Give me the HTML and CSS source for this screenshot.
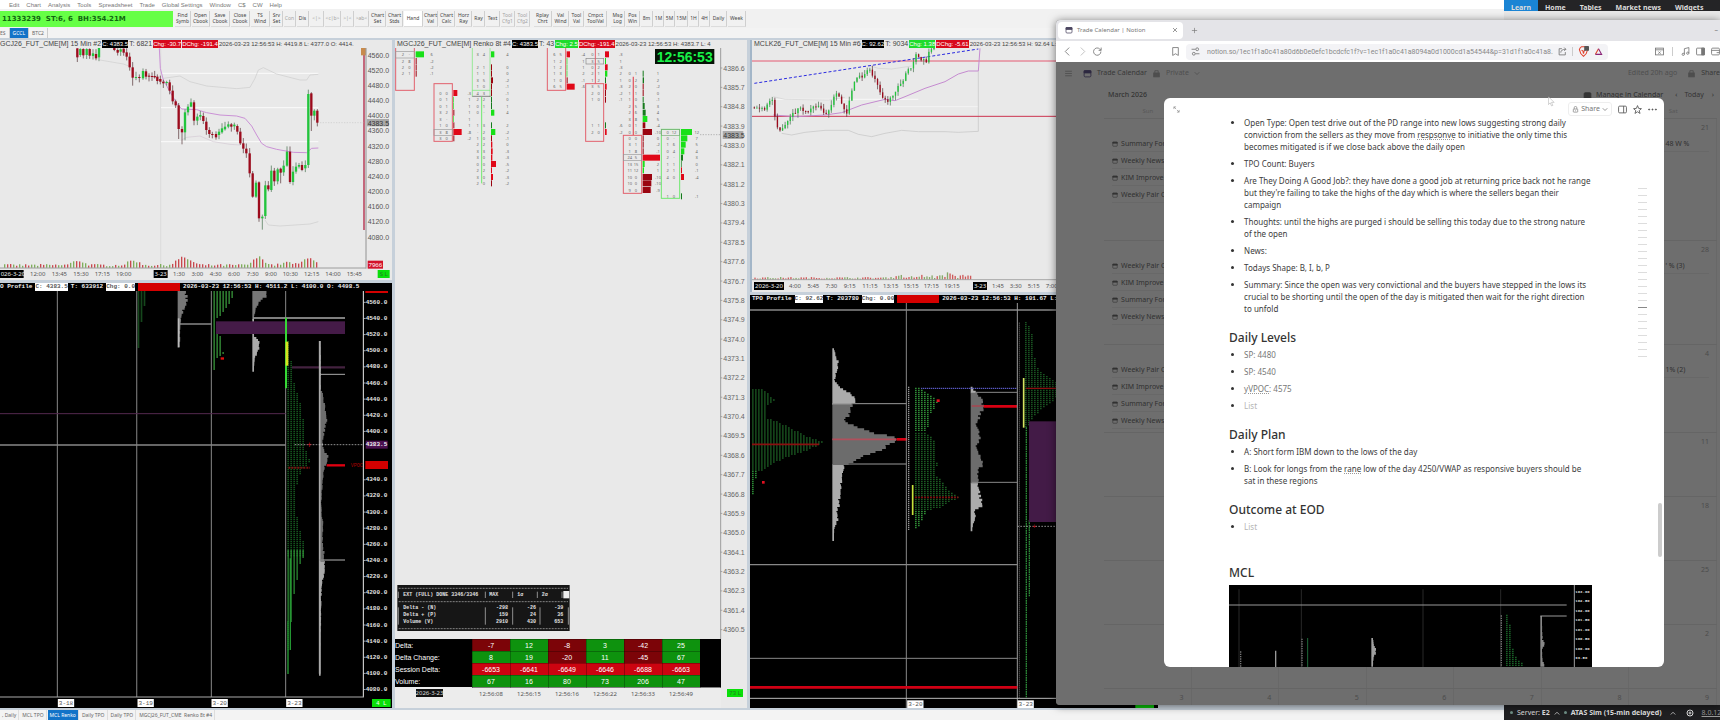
FILE: index.html
```html
<!DOCTYPE html>
<html lang="en">
<head>
<meta charset="utf-8">
<title>Trading desktop</title>
<link rel="stylesheet" href="styles.css">
</head>
<body>
<div class="desktop">
  <div class="platform">
    <nav class="menubar">
      <a href="#">Edit</a><a href="#">Chart</a><a href="#">Analysis</a><a href="#">Tools</a><a href="#">Spreadsheet</a><a href="#">Trade</a><a href="#">Global Settings</a><a href="#">Window</a><a href="#">C$</a><a href="#">CW</a><a href="#">Help</a>
    </nav>
    <div class="toolbar">
      <div class="status">11333239&nbsp; ST:6, 6&nbsp; BH:354.21M</div>
      <button class="w16">Find<br>Symb</button><button class="w18">Open<br>Cbook</button><button class="w19">Save<br>Cbook</button><button class="w19">Close<br>Cbook</button><button class="w19">TS<br>Wind</button><button class="w12">Srv<br>Set</button><button class="w12 dim">Con</button><button class="w12">Dis</button><button class="w14 dim">&lt;|&gt;</button><button class="w16 dim">&lt;c|b&gt;</button><button class="w12 dim">&gt;|&lt;</button><button class="w14 dim">&gt;ab&lt;</button><button class="w16">Chart<br>Set</button><button class="w16">Chart<br>Stds</button><button class="w19 on">Hand</button><button class="w14">Chart<br>Val</button><button class="w16">Chart<br>Calc</button><button class="w16">Horz<br>Ray</button><button class="w12">Ray</button><button class="w14">Text</button><button class="w14 dim">Tool<br>Cfg1</button><button class="w14 dim">Tool<br>Cfg2</button><button class="w18 group">Rplay<br>Chrt</button><button class="w16">Val<br>Wind</button><button class="w14">Tool<br>Val</button><button class="w22">Cmpct<br>ToolVal</button><button class="w14 group">Msg<br>Log</button><button class="w14">Pos<br>Win</button><button class="w12">8m</button><button class="w10">1M</button><button class="w10">5M</button><button class="w12">15M</button><button class="w10">1H</button><button class="w10">4H</button><button class="w16">Daily</button><button class="w18">Week</button>
    </div>
    <div class="books"><button>ES</button><button class="current">GCCL</button><button>BTC2</button></div>

    <main class="charts">
      <div class="stack left">
        <section class="chart light">
          <header class="info"><span>GCJ26_FUT_CME[M] 15 Min #2</span><b class="k">C: 4383.5</b><span>T: 6821</span><b class="r">Chg: -30.7</b><b class="r">DChg: -191.4</b><span class="when">2026-03-23 12:56:53 H: 4419.8 L: 4377.0 O: 4414.</span></header>
          <svg id="gold" viewBox="0 144 1176 696" preserveAspectRatio="xMinYMin slice"></svg>
        </section>
        <section class="chart dark">
          <header class="info mono"><span>O Profile</span><span class="w">C: 4383.5</span><span>T: 633912</span><span class="w">Chg: 0.0</span><span class="block"></span><span>2026-03-23 12:56:53 H: 4511.2 L: 4100.0 O: 4498.5</span></header>
          <svg id="goldTpo" viewBox="0 48 1176 1251" preserveAspectRatio="xMinYMin slice"></svg>
        </section>
      </div>
      <section class="chart light renko">
        <header class="info"><span>MGCJ26_FUT_CME[M] Renko 8t #4</span><b class="k">C: 4383.5</b><span>T: 43</span><b class="g">Chg: 2.5</b><b class="r">DChg: -191.4</b><span class="when">2026-03-23 12:56:53 H: 4383.7 L: 4</span></header>
        <svg id="renko" viewBox="15 144 1056 1776" preserveAspectRatio="xMinYMin slice"></svg>
        <table class="delta">
          <tbody>
            <tr><th scope="row">Delta:</th><td class="dr">-7</td><td class="gr">12</td><td class="dr">-8</td><td class="gr">3</td><td class="dr">-42</td><td class="gr">25</td><td></td></tr>
            <tr><th scope="row">Delta Change:</th><td class="gr">8</td><td class="gr">19</td><td class="dr">-20</td><td class="gr">11</td><td class="dr">-45</td><td class="gr">67</td><td></td></tr>
            <tr><th scope="row">Session Delta:</th><td class="rd">-6653</td><td class="rd">-6641</td><td class="rd">-6649</td><td class="rd">-6646</td><td class="rd">-6688</td><td class="rd">-6663</td><td></td></tr>
            <tr><th scope="row">Volume:</th><td class="gr">67</td><td class="gr">16</td><td class="gr">80</td><td class="gr">73</td><td class="gr">206</td><td class="gr">47</td><td></td></tr>
          </tbody>
          <tfoot>
            <tr><th scope="row"><span>2026-3-23</span></th><td>12:56:08</td><td>12:56:15</td><td>12:56:16</td><td>12:56:22</td><td>12:56:33</td><td>12:56:49</td><td></td></tr>
          </tfoot>
        </table>
        <span class="tag">73 L</span>
      </section>
      <div class="stack right">
        <section class="chart light crude">
          <header class="info"><span>MCLK26_FUT_CME[M] 15 Min #6</span><b class="k">C: 92.62</b><span>T: 9034</span><b class="g">Chg: 1.38</b><b class="r">DChg: -5.61</b><span class="when">2026-03-23 12:56:53 H: 92.64 L: 92.51</span></header>
          <svg id="crude" viewBox="21 144 1218 732" preserveAspectRatio="xMinYMin slice"></svg>
        </section>
        <section class="chart dark">
          <header class="info mono"><span>TPO Profile</span><span class="w">C: 92.62</span><span>T: 203780</span><span class="w">Chg: 0.00</span><span class="block"></span><span>2026-03-23 12:56:53 H: 101.67 L: 91.20</span></header>
          <svg id="crudeTpo" viewBox="15 39 1224 1215" preserveAspectRatio="xMinYMin slice"></svg>
        </section>
      </div>
    </main>
    <div class="sheets"><button>, Daily</button><button>MCL TPO</button><button class="current">MCL Renko</button><button>Daily TPO</button><button>Daily TPO</button><button>MGCJ26_FUT_CME&nbsp; Renko 8t #4</button></div>
  </div>

  <div class="atas">
    <nav><a class="here" href="#">Learn</a><a href="#">Home</a><a href="#">Tables</a><a href="#">Market news</a><a href="#">Widgets</a></nav>
    <footer><i class="dot"></i><span>Server: <b>E2</b></span><svg class="caret" viewBox="0 0 8 8"><path d="M1 6 4 3l3 3"/></svg><i class="dot"></i><b>ATAS Sim (15-min delayed)</b><span class="grow"></span><svg class="caret" viewBox="0 0 8 8"><path d="M1 6 4 3l3 3"/></svg><svg class="caret gear" viewBox="0 0 8 8"><circle cx="4" cy="4" r="3"/><circle cx="4" cy="4" r="1"/></svg><a href="#">8.0.12</a></footer>
  </div>

  <div class="browser">
    <div class="tabs">
      <div class="tab"><svg class="ico cal" viewBox="0 0 16 16"><rect x="2" y="3" width="12" height="11" rx="2"/><path class="fill" d="M2 3h12v4H2z"/></svg><span>Trade Calendar | Notion</span><button aria-label="Close tab"><svg class="ico" viewBox="0 0 16 16"><path d="M4 4l8 8M12 4l-8 8"/></svg></button></div>
      <button aria-label="New tab"><svg class="ico plus" viewBox="0 0 16 16"><path d="M8 2v12M2 8h12"/></svg></button>
      <span class="grow"></span><span class="min">–</span>
    </div>
    <div class="address">
      <button aria-label="Back"><svg class="ico" viewBox="0 0 16 16"><path d="M11 1 4 8l7 7"/></svg></button>
      <button class="off" aria-label="Forward"><svg class="ico" viewBox="0 0 16 16"><path d="m5 1 7 7-7 7"/></svg></button>
      <button aria-label="Reload"><svg class="ico" viewBox="0 0 16 16"><path d="M14 8A6.500 6.500 0 1 1 12 3.500L14 5.500M14.500 1v5H10"/></svg></button>
      <span class="room"></span>
      <button aria-label="Bookmark"><svg class="ico" viewBox="0 0 16 16"><path d="M3 1h10v14l-5-3-5 3z"/></svg></button>
      <div class="url"><svg class="ico" viewBox="0 0 16 16"><path d="M1 4h7M8 12h7"/><circle cx="11" cy="4" r="2.500"/><circle cx="5" cy="12" r="2.500"/></svg><input aria-label="Address" value="notion.so/1ec1f1a0c41a80d6b0e0efc1bcdcfc1f?v=1ec1f1a0c41a8094a0d1000cd1a54544&amp;p=31d1f1a0c41a8..." readonly><svg class="ico" viewBox="0 0 16 16"><path d="M7 3H2v11h11V9M5 10c0-4 3-6 9-6M11 1l3 3-3 3"/></svg><span class="bar"></span><svg class="ico brave" viewBox="0 0 16 16"><path d="M3 3 5 1h6l2 2 1 2-2 6-4 4-4-4L2 5zM5 6l2 1 1 4 1-4 2-1"/><rect class="badge" x="9" y="0" width="7" height="7" rx="1"/></svg><svg class="ico bat" viewBox="0 0 16 16"><path class="b1" d="M8 3 2.500 13"/><path class="b2" d="M8 3l5.500 10h-11"/></svg></div>
      <span class="grow"></span>
      <svg class="ico" viewBox="0 0 16 16"><rect x="1" y="2" width="14" height="12"/><path d="M1 5h14M6 8l4 4M10 8l-4 4"/></svg>
      <span class="bar wide"></span>
      <svg class="ico" viewBox="0 0 16 16"><path d="M6 13V3l8-2v10"/><circle cx="4" cy="13" r="2"/><circle cx="12" cy="11" r="2"/></svg>
      <svg class="ico" viewBox="0 0 16 16"><rect x="1" y="2" width="14" height="12" rx="1"/><path class="fill" d="M10 2h5v12h-5z"/></svg>
      <svg class="ico" viewBox="0 0 16 16"><rect x="1" y="2" width="14" height="12" rx="2"/><path d="M1 6h14M10 10h5"/></svg>
    </div>
    <div class="page">
      <div class="crumbs"><svg class="ico" viewBox="0 0 16 16"><path d="M2 4h12M2 8h12M2 12h12"/></svg><svg class="ico cal" viewBox="0 0 16 16"><rect x="2" y="3" width="12" height="11" rx="2"/><path class="fill" d="M2 3h12v4H2z"/></svg><span class="name">Trade Calendar</span><svg class="ico" viewBox="0 0 16 16"><rect class="fill" x="3" y="7" width="10" height="7"/><path d="M5 7V3h6v4"/></svg><span>Private</span><svg class="caret" viewBox="0 0 8 8"><path d="M1 3l3 3 3-3"/></svg><span class="grow"></span><span class="edited">Edited 20h ago</span><svg class="ico" viewBox="0 0 16 16"><rect class="fill" x="3" y="7" width="10" height="7"/><path d="M5 7V3h6v4"/></svg><span class="name">Share</span></div>
      <div class="month"><b>March 2026</b><span class="grow"></span><svg class="ico" viewBox="0 0 16 16"><rect class="fill" x="2" y="3" width="12" height="11" rx="2"/></svg><b>Manage in Calendar</b><span class="prev">‹</span><span>Today</span><span class="next">›</span></div>
      <div class="days"><span>Sun</span><span>Mon</span><span>Tue</span><span>Wed</span><span>Thu</span><span>Fri</span><span>Sat</span></div>
      <div class="weeks" id="weeks"></div>

      <article class="note">
        <header>
          <svg class="ico" viewBox="0 0 16 16"><path d="M2 7V2h5M2 2l5 5M14 9v5H9M14 14l-5-5"/></svg>
          <span class="grow"></span>
          <button class="share"><svg class="ico" viewBox="0 0 16 16"><rect x="3" y="7" width="10" height="7" rx="1"/><path d="M5 7V4a3 3 0 0 1 6 0v3M8 10v2"/></svg>Share<svg class="caret" viewBox="0 0 8 8"><path d="M1 3l3 3 3-3"/></svg></button>
          <button aria-label="Side panel"><svg class="ico" viewBox="0 0 16 16"><rect x="1" y="2" width="14" height="12" rx="2"/><path d="M10 2v12"/></svg></button>
          <button aria-label="Favourite"><svg class="ico" viewBox="0 0 16 16"><path d="m8 1 2 5 5 .5-4 3.500 1.500 5L8 12l-4.500 3L5 10 1 6.500 6 6z"/></svg></button>
          <button aria-label="More"><svg class="ico" viewBox="0 0 16 16"><circle class="fill" cx="2" cy="8" r="1"/><circle class="fill" cx="8" cy="8" r="1"/><circle class="fill" cx="14" cy="8" r="1"/></svg></button>
        </header>
        <div class="body">
          <ul>
            <li>Open Type: Open test drive out of the PD range into new lows suggesting strong daily conviction from the sellers as they move from <u>respsonve</u> to initiative the only time this becomes mitigated is if we close back above the daily open</li>
            <li>TPO Count: Buyers</li>
            <li>Are They Doing A Good Job?: they have done a good job at returning price back not he range but they're failing to take the highs of the day which is where the sellers began their campaign</li>
            <li>Thoughts: until the highs are purged i should be selling this today due to the strong nature of the open</li>
            <li>News:</li>
            <li>Todays Shape: B, I, b, P</li>
            <li>Summary: Since the open was very convictional and the buyers have stepped in the lows its crucial to be shorting until the open of the day is mitigated then wait for the right direction to unfold</li>
          </ul>
          <h2>Daily Levels</h2>
          <ul class="soft"><li>SP: 4480</li><li>SP: 4540</li><li><u>yVPOC</u>: 4575</li><li class="empty">List</li></ul>
          <h2>Daily Plan</h2>
          <ul><li>A: Short form IBM down to the lows of the day</li><li>B: Look for longs from the <u>rane</u> low of the day 4250/VWAP as responsive buyers should be sat in these regions</li></ul>
          <h2>Outcome at EOD</h2>
          <ul><li class="empty">List</li></ul>
          <h2 class="far">MCL</h2>
          <svg id="shot" viewBox="535 919 1089 249" preserveAspectRatio="xMinYMin slice"></svg>
        </div>
        <div class="outline" id="outline"></div>
        <div class="scroll"></div>
      </article>
      <svg class="cursor" viewBox="0 0 16 24"><path d="M1 1v18l4-4 3 7 3-1-3-7h6z"/></svg>
    </div>
  </div>
</div>
<script src="app.js"></script>
</body>
</html>
```

FILE: styles.css
```css
* { box-sizing: border-box; }
body { margin: 0; background: #f0f0f0; color: #555; font-family: "Liberation Sans", Arial, sans-serif; }
button { font: inherit; color: inherit; background: none; border: 0; padding: 0; margin: 0; }
a { color: inherit; text-decoration: none; }
.desktop { position: relative; height: 100vh; overflow: hidden; }
.grow { flex: 1; }

/* trading platform */
.platform { height: 100%; display: grid; grid-template-rows: 9px 19px 10px minmax(0, 1fr) 10px; font-size: 7px; white-space: nowrap; }
.menubar { display: flex; gap: 7px; padding-left: 9px; align-items: center; background: #fff; font-size: 6px; color: #777; }
.toolbar { display: flex; align-items: center; gap: 1px; background: #f1f1f1; color: #444; }
.toolbar button { flex: none; height: 16px; border-right: 1px solid #cfcfcf; border-bottom: 1px solid #dcdcdc; text-align: center; font: 5px/6px "Noto Sans", sans-serif; }
.toolbar .dim { color: #a4a4a4; }
.toolbar .on { background: #fff; }
.toolbar .group { margin-left: 3px; }
.status { width: 173px; height: 16px; margin-right: 1px; padding-left: 2px; background: #66ff46; color: #116611; font: bold 7px/16px "DejaVu Sans", sans-serif; }
.w10 { width: 10px; } .w12 { width: 12px; } .w14 { width: 14px; } .w16 { width: 16px; } .w18 { width: 18px; } .w19 { width: 19px; } .w22 { width: 22px; }
.books, .sheets { display: flex; align-items: stretch; font: 5px/9px "Noto Sans", sans-serif; color: #666; background: #f3f3f3; }
.books button { padding: 0 3px; border-right: 1px solid #ccc; }
.books button:first-child { padding-left: 0; }
.sheets { gap: 1px; }
.sheets button { padding: 0 2px; border-right: 1px solid #ddd; }
.books .current, .sheets .current { background: #1273c8; color: #fff; }

.charts { display: grid; grid-template-columns: 392fr 352fr 408fr 559fr; gap: 3px; padding: 2px 0; background: #c6d0da; min-height: 0; }
.stack { display: grid; gap: 3px; min-height: 0; }
.stack.left { grid-template-rows: minmax(0, 240fr) minmax(0, 425fr); }
.stack.right { grid-template-rows: minmax(0, 252fr) minmax(0, 413fr); }
.chart { position: relative; display: flex; flex-direction: column; min-height: 0; min-width: 0; overflow: hidden; }
.chart > svg { flex: 1; width: 100%; min-height: 0; display: block; }
.light { background: #e9e9e9; }
.dark { background: #000; color: #e8e8e8; }
.crude { border-left: 2px solid #a3b6c8; }
.info { flex: none; height: 8px; display: flex; gap: 1px; font: 7px/8px "Liberation Sans", sans-serif; overflow: hidden; color: #444; }
.info .when { font-size: 6px; }
.renko .info, .crude .info { padding-left: 2px; }
.info b { font-weight: normal; color: #fff; font-size: 6px; }
.info .k { background: #000; } .info .r { background: #d80a1c; } .info .g { background: #1fdc2c; }
.mono { font: bold 6px/8px "Liberation Mono", monospace; color: #eee; gap: 3px; padding-right: 2px; }
.mono .w { background: #fff; color: #555; }
.mono .block { width: 42px; background: #d40000; flex: none; }
.stack.right .mono { padding-left: 2px; }
.delta { width: 326px; border-collapse: collapse; table-layout: fixed; background: #000; color: #fff; font: 7px/11px "Liberation Sans", sans-serif; flex: none; }
.delta th { width: 77px; text-align: left; font-weight: normal; padding: 0; }
.delta td { width: 38px; padding: 0; text-align: center; border: 1px solid #0004; height: 12px; }
.delta td:last-child { width: auto; }
.delta .gr { background: #0e920e; } .delta .dr { background: #7c0408; } .delta .rd { background: #cc0410; }
.delta tfoot { background: #ececec; color: #555; font: 6px/13px "Noto Sans", sans-serif; }
.delta tfoot td { height: 21px; border: 0; vertical-align: top; }
.delta tfoot th { text-align: center; vertical-align: top; padding-right: 8px; }
.delta tfoot span { background: #111; color: #ddd; }
.tag { position: absolute; right: 4px; bottom: 11px; padding: 0 2px; background: #0adf0a; color: #267a26; font-size: 6px; line-height: 8px; }

/* platform window behind the browser */
.atas { position: absolute; top: 0; bottom: 0; right: 0; width: 216px; display: flex; flex-direction: column; justify-content: space-between; color: #ddd; font: 7px/16px "Noto Sans", sans-serif; background: #e8e8e8; }
.atas nav { display: flex; height: 11px; background: #242426; overflow: hidden; font-weight: bold; }
.atas nav a { padding: 0 7px; font-size: 7px; }
.atas .here { background: #1a84d4; }
.atas footer { height: 15px; display: flex; align-items: center; gap: 4px; padding: 0 2px 0 6px; background: #1f1f21; white-space: nowrap; overflow: hidden; }
.atas footer a { color: #999; text-decoration: underline; }
.atas footer .gear { margin: 0 4px 0 6px; width: 8px; height: 8px; }
.dot { width: 3px; height: 3px; border-radius: 50%; background: #6f8f86; flex: none; }

/* browser */
.browser { position: absolute; left: 61.4%; right: 0; top: 20px; bottom: 15px; display: flex; flex-direction: column; background: #6e6e6e; border-radius: 4px 0 0 4px; overflow: hidden; box-shadow: 0 1px 8px #0008; font: 7px/10px "Noto Sans", "Open Sans", sans-serif; white-space: nowrap; }
.ico, .caret { width: 9px; height: 9px; flex: none; fill: none; stroke: currentColor; stroke-width: 1.5px; display: block; }
.caret { width: 6px; height: 6px; stroke-width: 1px; }
.fill { fill: currentColor; }
.tabs { height: 21px; flex: none; display: flex; align-items: center; gap: 8px; padding: 1px 0 2px 2px; background: #e4e4e8; color: #777; }
.tab { width: 125px; height: 17px; border-radius: 4px; background: #fff; display: flex; align-items: center; gap: 4px; padding: 0 4px 0 7px; }
.tab span { flex: 1; font-size: 6px; }
.tab .ico { width: 8px; height: 8px; }
.plus { width: 7px; height: 7px; }
.cal { color: #4b4560; }
.tabs .min { padding-right: 2px; }
.address { height: 21px; flex: none; display: flex; align-items: center; gap: 6px; padding: 0 0 0 7px; background: #fff; color: #777; }
.address .off { opacity: .5; }
.room { width: 57px; }
.url { width: 422px; height: 16px; border-radius: 4px; background: #f3f3f6; display: flex; align-items: center; gap: 5px; padding: 0 5px; }
.url input { flex: 1; min-width: 0; border: 0; padding: 0 0 0 2px; background: none; color: #888; font: 7px/12px Roboto, sans-serif; }
.bar { width: 1px; height: 9px; background: #ccc; }
.bar.wide { margin: 0 2px; }
.brave { color: #e2432e; width: 11px; height: 11px; }
.badge { fill: #555; stroke: none; }
.b1 { stroke: #e04a2c; } .b2 { stroke: #8b2478; }
.bat { stroke-width: 2px; }

.page { position: relative; flex: 1; min-height: 0; display: flex; flex-direction: column; background: #6e6e6e; color: #4e4e4e; overflow: hidden; }
.crumbs { height: 22px; flex: none; display: flex; align-items: center; gap: 5px; padding-left: 8px; }
.crumbs .name, .crumbs .cal { color: #383838; }
.crumbs .cal { margin-left: 5px; color: #2d2840; }
.crumbs .edited { margin-right: 5px; }
.month { height: 22px; flex: none; display: flex; align-items: center; gap: 4px; padding: 0 6px 0 52px; color: #343434; }
.month b { font-weight: 500; }
.month .prev { margin: 0 3px 0 8px; }
.month .next { margin-left: 4px; }
.days { height: 13px; flex: none; display: grid; grid-template-columns: repeat(7, 1fr); margin: 0 3px 0 48px; text-align: center; font-size: 6px; color: #585858; border-bottom: 1px solid #656565; }
.weeks { flex: none; display: grid; grid-template-rows: 122px 104px 88px repeat(5, 64px); margin: 0 3px 0 48px; }
.week { display: grid; grid-template-columns: repeat(7, 1fr); border-bottom: 1px solid #656565; }
.day { border-right: 1px solid #686868; padding: 4px 7px 0 8px; overflow: hidden; text-align: right; color: #4c4c4c; min-width: 0; }
.day p { display: flex; align-items: center; gap: 3px; margin: 0 0 1px; height: 16px; border-bottom: 1px solid #686868; color: #303030; }
.day p:nth-child(2) { margin-top: 3px; }
.day p .ico { width: 6px; height: 6px; }
.day p.tail { padding-left: 28px; }

.note { position: absolute; left: 108px; right: 56px; top: 36px; bottom: 38px; background: #fff; border-radius: 6px; overflow: hidden; color: #3c3c3c; white-space: normal; display: flex; flex-direction: column; }
.note header { height: 19px; flex: none; display: flex; align-items: center; gap: 6px; padding: 3px 7px 0 9px; color: #555; }
.note header > .ico { width: 7px; height: 7px; color: #888; }
.share { display: flex; align-items: center; gap: 2px; padding: 1px 3px; border: 1px solid #eee; border-radius: 3px; color: #777; }
.note .share .ico { width: 7px; height: 7px; }
.body { padding: 0 72px 0 65px; font: 8px/12px "Noto Sans", "Open Sans", sans-serif; }
.body ul { margin: 0; padding: 0 0 0 15px; display: flex; flex-direction: column; gap: 5px; }
.body li { padding: 0; }
.body li::marker { font-size: 8px; color: #333; }
.body u { text-decoration: underline dotted #999; }
.soft { color: #777; }
.body .empty { color: #b5b5b5; }
.body h2 { margin: 15px 0 3px; font: 500 12px/16px "Noto Sans", "Open Sans", sans-serif; color: #333; }
.body .far { margin: 32px 0 4px; }
.body svg { display: block; width: 100%; height: 83px; }
.outline { position: absolute; right: 17px; top: 90px; display: flex; flex-direction: column; gap: 6px; }
.outline i { width: 9px; height: 1px; background: #ddd; }
.outline .at { background: #888; }
.scroll { position: absolute; right: 2px; top: 405px; width: 4px; height: 54px; border-radius: 2px; background: #ccc; }
.cursor { position: absolute; left: 492px; top: 34px; width: 7px; height: 11px; fill: #fff; stroke: #999; stroke-width: 1px; }
```

FILE: app.js
```js
const NS = "http://www.w3.org/2000/svg";
const SANS = '"Liberation Sans",Arial,sans-serif';
const NOTO = '"Noto Sans",sans-serif';
const MONO = '"Liberation Mono",monospace';

let seed = 7;
const rnd = () => (seed = (seed * 16807) % 2147483647) / 2147483647;

/* piecewise linear lookup over [[key, value], ...] */
const lerp = (pts, k) => {
  for (let i = 1; i < pts.length; i++) {
    if (k <= pts[i][0]) {
      const [a, b] = [pts[i - 1], pts[i]];
      return a[1] + (b[1] - a[1]) * (k - a[0]) / (b[0] - a[0]);
    }
  }
  return pts[pts.length - 1][1];
};

const canvas = id => {
  const root = document.getElementById(id);
  const el = (tag, attrs, text) => {
    const n = document.createElementNS(NS, tag);
    for (const k in attrs) n.setAttribute(k, attrs[k]);
    if (text !== undefined) n.textContent = text;
    root.appendChild(n);
    return n;
  };
  const c = {
    rect: (x, y, width, height, fill) => el("rect", { x, y, width, height, fill }),
    box: (x, y, width, height, stroke, w = 2) => el("rect", { x, y, width, height, stroke, fill: "none", "stroke-width": w }),
    line: (x1, y1, x2, y2, stroke, w = 3, dash = "none") => el("line", { x1, y1, x2, y2, stroke, "stroke-width": w, "stroke-dasharray": dash }),
    curve: (points, stroke, w = 2) => el("polyline", { points, stroke, fill: "none", "stroke-width": w, "stroke-linejoin": "round" }),
    text: (x, y, s, fill, size = 18, family = NOTO, anchor = "middle", weight = "normal") =>
      el("text", { x, y, fill, "font-size": size, "font-family": family, "text-anchor": anchor, "font-weight": weight, "dominant-baseline": "central", "xml:space": "preserve" }, s),
    badge: (x, y, w, s, bg, fg, size = 18, family = NOTO) => {
      c.rect(x - w / 2, y - 12, w, 24, bg);
      c.text(x, y, s, fg, size, family);
    },
    candle: (x, top, bottom, up, high, low, w = 7) => {
      const col = up ? "#22c53c" : "#9c0a1c";
      c.line(x, high, x, low, up ? "#3d6b45" : "#4d2a2e", 2);
      c.rect(x - w / 2, top, w, Math.max(3, bottom - top), col);
    },
    /* stepped volume histogram growing right from x, one path per shade */
    profile: (x, pts, shade) => {
      const end = pts[pts.length - 1][0];
      const paths = {};
      for (let y = pts[0][0]; y < end; y += 6) {
        const base = lerp(pts, y) - x;
        const w = Math.max(5, base + (rnd() - 0.5) * Math.min(10, base * 0.4));
        const col = shade(y);
        paths[col] = (paths[col] || "") + `M${x} ${y}h${w.toFixed(1)}v8h${(-w).toFixed(1)}z`;
      }
      for (const fill in paths) el("path", { d: paths[fill], fill });
    },
    /* letter blocks of a market profile */
    tpo: (x, pts, color) => {
      let d = "";
      const end = pts[pts.length - 1][0];
      for (let y = pts[0][0]; y < end; y += 6) d += `M${x} ${y}h${Math.max(5, Math.round((lerp(pts, y) - x) / 9) * 9)}`;
      el("path", { d, stroke: color, "stroke-width": 4, "stroke-dasharray": "5 4", fill: "none" });
    }
  };
  return c;
};

/* gold, 15 minutes */
{
  const c = canvas("gold");
  c.line(482, 145, 482, 803, "#d6d6d6", 2);
  for (const y of [220, 323, 425]) c.line(483, y, 955, y, "#f8f8f8", 4);
  c.curve("300,180 370,192 392,200", "#cfcfcf");
  c.curve("490,235 540,228 570,245 620,258 710,266 750,262 765,235 775,210 790,203 830,222 900,240 920,240 930,225 955,223", "#cbcbcb");
  c.curve("545,420 560,412 600,408 640,425 690,433 720,435", "#d3c8d3");
  c.curve("795,660 805,675 840,678 930,672 955,665", "#cbcbcb");
  c.curve("478,145 481,205 490,240 510,275 530,310 545,327 590,329 620,338 660,345 710,348 735,355 755,378 770,405 785,430 800,440 830,448 880,457 920,458 935,445 955,444", "#cb92d6", 3);
  const bars = [
    [232,145,172,0],[241,147,165,1],[250,147,166,0],[260,147,165,1],[269,147,167,0],[279,160,168,1],[288,162,175,0],[297,144,172,1],
    [343,144,150,0],[353,150,158,0],[362,148,155,1],[371,146,158,0],[380,157,170,0],[389,170,202,0],[398,202,233,0],[408,231,233,1],[418,231,234,0],
    [429,213,235,1],[438,214,230,0],[447,227,230,0],[456,228,231,0],[464,228,232,0],[472,230,243,0],[481,237,245,0],[490,245,250,0],[500,246,249,1],[509,247,272,0],[518,272,304,0],
    [527,304,316,0],[536,316,387,0],[546,387,397,0],[555,337,397,1],[564,320,337,1],[573,307,320,1],[582,307,362,0],[592,350,362,1],[601,345,350,1],
    [610,348,363,0],[619,365,390,0],[628,390,402,0],[637,402,405,0],[648,402,412,0],[657,395,405,1],[666,385,397,1],[675,380,388,1],[685,373,380,1],
    [694,373,380,0],[703,374,379,1],[712,378,395,0],[721,395,430,0],[730,430,446,0],[739,446,460,0],[749,460,520,0],[758,520,590,0],[768,548,590,1],
    [777,547,655,0],[787,650,655,1],[796,556,648,1],[805,556,568,0],[814,512,570,1],[823,512,544,0],[833,508,544,1],[842,506,518,0],[851,497,517,1],
    [861,455,497,1],[870,455,546,0],[879,515,546,1],[888,500,515,1],[897,495,500,1],[906,495,510,0],[916,495,505,1],[925,282,495,1],[934,280,347,0],[943,332,347,1],[952,332,368,0]
  ];
  const long = { 398: 24, 536: 30, 546: 36, 555: 24, 787: 34, 934: 46, 842: 32, 573: 2 };
  for (const [x, a, b, up] of bars) c.candle(x, a, b, up, Math.max(145, a - 3 - rnd() * 14), b + (long[x] || 3 + rnd() * 12));
  for (let x = 12; x < 956; x += 9) {
    const peak = [[232,14],[398,14],[540,18],[565,12],[775,24],[860,8],[925,24]].reduce((s, [p, h]) => s + h * Math.exp(-(((x - p) / 22) ** 2)), 0);
    const h = 4 + rnd() * 7 + peak;
    c.rect(x, 803 - h, 4, h, rnd() > 0.45 ? "#c8484e" : "#7fae5c");
  }
  c.line(0, 804, 1097, 804, "#777", 2);
  c.line(1092, 150, 1092, 690, "#c4687c", 6);
  c.rect(1083, 144, 14, 22, "#c88b4c");
  c.line(1098, 144, 1098, 806, "#666", 2);
  c.line(960, 368, 1090, 368, "#c9c9c9", 2, "4 4");
  c.rect(1101, 357, 66, 22, "#a9a9a9");
  for (let i = 0; i <= 12; i++) c.text(1103, 165 + i * 45.5, (4560 - i * 40).toFixed(1), "#555", 21, SANS, "start");
  c.text(1103, 369, "4383.5", "#333", 21, SANS, "start");
  c.badge(1126, 794, 46, "7966", "#d3122a", "#fff");
  [["12:00",113],["13:45",178],["15:30",243],["17:15",307],["19:00",371],["1:30",537],["3:00",592],["4:30",647],["6:00",702],["7:30",758],["9:00",813],["10:30",871],["12:15",935],["14:00",999],["15:45",1063]].forEach(([s, x]) => c.text(x, 822, s, "#555"));
  c.rect(0, 810, 71, 24, "#000");
  c.text(2, 822, "026-3-20", "#eee", 18, NOTO, "start");
  c.badge(482, 822, 42, "3-23", "#000", "#eee");
  c.badge(1151, 822, 36, "S L", "#0adf0a", "#267a26", 18);
}

/* gold, market profile */
{
  const c = canvas("goldTpo");
  c.tpo(413, [[48,443],[90,436],[150,425],[218,416]], "#1d5f26");
  c.profile(533, [[48,555],[70,562],[100,550],[120,543],[150,540],[216,539]], () => "#777");
  c.line(536, 130, 536, 216, "#bbb", 5);
  c.line(540, 147, 634, 147, "#999", 4);
  c.tpo(640, [[48,705],[80,695],[110,672],[140,645],[180,655],[190,668],[235,672],[255,650],[285,641]], "#3a9c3c");
  c.profile(757, [[48,795],[60,795],[90,770],[130,760],[180,762],[195,775],[225,776],[240,765],[283,761]], y => y < 130 ? "#777" : "#aaa");
  c.rect(648, 139, 387, 38, "#451b48");
  c.line(760, 129, 1035, 129, "#aaa", 4);
  c.rect(662, 247, 10, 7, "#e01010");
  c.tpo(862, [[200,866],[240,874],[310,880],[350,893],[400,908],[450,914],[520,916],[560,935],[590,905],[640,890],[720,893],[760,900],[825,920],[845,915]], "#14521d");
  c.tpo(862, [[828,918],[845,914],[870,900],[900,897],[960,884],[1040,880]], "#2c8e34");
  c.tpo(862, [[1040,875],[1125,871]], "#1f7f2a");
  c.line(864, 1040, 864, 1197, "#1f7f2a", 5);
  c.line(871, 850, 871, 1125, "#239632", 4);
  c.line(172, 48, 172, 1266, "#888");
  c.line(410, 48, 410, 1266, "#666", 4);
  c.line(634, 48, 634, 1266, "#888");
  c.line(857, 48, 857, 1266, "#888");
  c.line(858, 128, 858, 340, "#36d836", 6);
  c.line(861, 200, 861, 272, "#d8e020", 8);
  c.line(0, 416, 857, 416, "#53294f", 3);
  c.line(0, 510, 857, 510, "#888", 4);
  c.line(876, 277, 1035, 277, "#43223f", 7);
  c.line(865, 578, 930, 578, "#7a1010", 6, "6 3");
  c.profile(957, [[198,962],[340,962],[360,970],[435,978],[500,966],[540,982],[590,970],[680,963],[760,970],[800,968],[855,975],[890,972],[930,964],[1195,960]], y => y > 340 && y < 855 ? "#6d6d6d" : "#a8a8a8");
  c.line(959, 198, 959, 1196, "#aaa", 5);
  c.line(957, 298, 1035, 298, "#aaa");
  c.line(959, 855, 1035, 855, "#888", 4);
  c.line(980, 571, 1035, 571, "#e00010", 7);
  c.text(1070, 572, "VPOC", "#a00", 15, MONO);
  c.line(884, 509, 1090, 509, "#ddd", 2, "5 4");
  c.text(928, 509, "+", "#d01020", 24);
  c.line(1090, 48, 1090, 1266, "#eee");
  c.line(0, 1266, 1092, 1266, "#aaa");
  for (let i = 0; i <= 24; i++) {
    if (i === 9 || i === 10) continue;
    c.line(1091, 82 + i * 48.4, 1097, 82 + i * 48.4, "#eee", 2);
    c.text(1097, 82 + i * 48.4, (4560 - i * 20).toFixed(1), "#e4e4e4", 18, MONO, "start", "bold");
  }
  c.rect(1097, 497, 66, 24, "#4a1150");
  c.text(1097, 509, "4383.5", "#eee", 18, MONO, "start", "bold");
  c.rect(1096, 558, 68, 24, "#d40000");
  c.rect(1096, 48, 68, 6, "#d40000");
  [["3-18",198],["3-19",437],["3-20",659],["3-23",883]].forEach(([s, x]) => c.badge(x, 1284, 49, s, "#fff", "#555", 18, MONO));
  c.badge(1144, 1284, 56, "4 L", "#0adf0a", "#efe", 18, MONO);
}

/* gold, renko footprint */
{
  const c = canvas("renko");
  const R = "#e2606c", G = "#6fe86f";
  const red = "#e00818", dark = "#9a0410", green = "#18e018", forest = "#157a1c";
  const col = (x, rows, barX, labelX) => rows.forEach(([y, a, b, w, color, n]) => {
    c.text(x - 9, y, a, "#666", 12);
    c.text(x + 10, y, b, "#666", 12);
    c.rect(barX, y - 9, w, 18, color);
    c.text(labelX, y, n, "#666", 12);
  });
  c.box(17, 140, 56, 131, R, 3);
  c.box(17, 155, 56, 19, "#999");
  col(48, [[163,"2","·",25,green,"6"],[183,"2","8",3,dark,"-2"],[202,"2","0",3,dark,"-2"],[221,"2","1",3,dark,"-1"]], 77, 125);
  c.box(132, 251, 55, 173, R, 3);
  c.box(132, 388, 55, 18, "#999");
  col(160, [[279,"0","0",12,red,"-3"],[299,"0","1",2,green,"1"],[318,"0","1",2,green,"1"],[338,"3","2",3,dark,"1"],[357,"3","·",2,green,"1"],[376,"1","0",3,dark,"1"],[396,"3","8",25,red,"-8"],[415,"3","0",3,dark,"-2"]], 190, 238);
  c.line(247, 144, 247, 290, G, 2);
  c.line(300, 144, 300, 290, G, 2);
  c.line(247, 271, 300, 271, G, 2);
  c.line(247, 289, 302, 289, "#555", 2);
  c.line(275, 290, 275, 550, G, 3);
  const mid = [[163,"3","4",10,green,"4"],[202,"2","1",3,dark,"0"],[221,"1","1",3,dark,"0"],[241,"3","5",6,dark,"-2"],[260,"1","0",3,dark,"-1"],[279,"4","3",3,dark,"-1"],[299,"2","2",3,forest,"0"],[318,"0","1",3,forest,"1"],[338,"0","·",10,green,"4"],[376,"1","3",3,forest,"2"],[396,"·","2",13,green,"-2"],[415,"1","0",3,dark,"-1"],[434,"2","2",4,red,"0"],[454,"3","3",5,red,"-3"],[473,"3","0",4,red,"-3"],[492,"0","0",15,red,"-5"],[511,"2","2",3,red,"-2"],[531,"3","0",6,red,"-3"],[550,"2","0",3,dark,"-2"]];
  col(272, mid, 303, 352);
  c.box(472, 140, 55, 131, R, 3);
  col(502, [[163,"6","5",10,red,"-4"],[183,"1","2",2,green,"1"],[202,"1","2",2,green,"1"],[221,"1","3",2,green,"2"],[241,"1","0",3,dark,"-1"],[260,"6","5",24,red,"-6"]], 530, 580);
  c.box(588, 175, 53, 17, "#888");
  c.line(616, 144, 616, 251, R, 3);
  c.box(587, 251, 54, 173, R, 3);
  col(616, [[163,"0","1",12,red,"-3"],[183,"3","5",3,green,"1"],[202,"0","2",8,red,"-3"],[221,"2","1",7,green,"2"],[241,"1","2",3,forest,"1"],[260,"3","5",5,red,"-3"],[279,"2","0",3,dark,"-2"],[299,"1","0",3,dark,"-1"],[376,"1","1",3,forest,"-6"],[396,"2","0",5,red,"-2"]], 645, 692);
  c.line(730, 230, 730, 405, R, 4);
  c.box(700, 406, 55, 174, R, 3);
  c.box(700, 463, 55, 19, "#999");
  col(728, [[221,"0","1",3,forest,"1"],[241,"0","2",4,forest,"2"],[260,"2","0",3,dark,"-2"],[279,"1","1",3,dark,"0"],[299,"1","0",3,forest,"-1"],[318,"2","5",6,forest,"3"],[338,"2","6",9,forest,"4"],[357,"3","8",14,green,"5"],[376,"0","1",8,dark,"-4"],[396,"0","0",28,dark,"-10"],[415,"0","0",3,dark,"0"],[434,"3","1",3,dark,"-2"],[454,"1","8",3,dark,"-1"],[473,"24","5",52,red,""],[492,"13","15",6,green,"2"],[511,"11","12",4,green,"1"],[531,"10","0",28,dark,"-10"],[550,"10","0",26,dark,"-10"],[570,"9","0",24,dark,"-9"]], 758, 804);
  c.box(814, 388, 55, 207, G, 3);
  c.box(814, 388, 55, 18, "#7a7");
  col(842, [[396,"0","12",33,green,"12"],[415,"0","·",19,green,"7"],[434,"1","6",14,green,"5"],[454,"0","4",10,green,"4"],[473,"2","·",6,forest,"3"],[492,"1","1",2,forest,"0"],[511,"2","1",3,red,"-1"],[531,"4","0",9,red,"-4"],[589,"1","0",3,forest,"-1"]], 873, 920);
  c.line(930, 404, 992, 404, "#999", 2, "4 4");
  c.rect(795, 147, 178, 45, "#061206");
  c.text(884, 171, "12:56:53", "#18f048", 42, SANS, "middle", "bold");
  c.line(992, 144, 992, 1920, "#777", 2);
  c.rect(998, 393, 62, 24, "#aaa");
  for (let i = 0; i <= 29; i++) {
    const y = 204 + i * 58.1;
    c.line(992, y, 997, y, "#888", 2);
    c.text(1000, y, (4386.6 - i * 0.9).toFixed(1), "#666", 21, SANS, "start");
  }
  c.text(1000, 405, "4383.5", "#333", 21, SANS, "start");
  c.rect(22, 1755, 517, 138, "#161616");
  for (const y of [1765, 1805, 1886]) c.line(26, y, 534, y, "#bbb", 2, "6 3");
  for (const x of [25, 286, 368, 450, 535]) c.line(x, 1822, x, 1874, "#ccc", 2);
  for (const x of [25, 286, 368, 442, 516]) c.line(x, 1775, x, 1794, "#ccc", 2);
  c.rect(520, 1773, 18, 22, "#eee");
  const t = (x, y, s, a = "start") => c.text(x, y, s, "#e2e2e2", 15, MONO, a, "bold");
  t(40, 1784, "EXT (FULL) DONE 3346/3346"); t(298, 1784, "MAX"); t(382, 1784, "1σ"); t(455, 1784, "2σ");
  [["Delta - (N)","-298","-26","-39"],["Delta + (P)","159","24","36"],["Volume (V)","2910","430","653"]].forEach((r, i) => {
    const y = 1825 + i * 20;
    t(40, y, r[0]); t(354, y, r[1], "end"); t(438, y, r[2], "end"); t(520, y, r[3], "end");
  });
}

/* crude, 15 minutes */
{
  const c = canvas("crude");
  c.line(85, 298, 520, 298, "#f5f5f5", 4);
  c.line(400, 320, 700, 320, "#f3f3f3", 3);
  c.curve("85,290 120,298 250,300 300,292", "#d0d0d0");
  c.curve("365,195 400,205 440,207 500,198", "#d0d0d0");
  c.curve("110,400 140,405 180,397 240,391 310,391 340,403 380,410 420,400 470,391 520,395 600,395 640,397 700,394 700,213", "#c2c2c2");
  c.line(21, 183, 1239, 183, "#e45a72", 3);
  c.line(21, 349, 1239, 349, "#cc3450", 3);
  c.curve("85,345 150,350 240,345 290,338 350,315 420,298 450,302 480,290 540,265 600,245 640,222 670,213 700,213 705,145", "#c58bd0", 3);
  c.line(28, 250, 700, 147, "#2a2ae0", 3, "9 6");
  const path = [[28,322],[45,325],[60,330],[75,300],[85,300],[92,370],[108,395],[125,370],[140,345],[155,335],[163,320],[185,340],[208,315],[225,322],[240,345],[255,330],[265,295],[278,280],[290,310],[305,340],[315,290],[325,255],[340,225],[352,235],[362,215],[375,208],[385,230],[400,255],[410,290],[430,305],[445,285],[460,255],[475,240],[488,210],[500,205],[510,170],[518,160],[525,185],[535,175],[545,185],[553,150],[569,145]];
  let prev = 322;
  for (let x = 28; x < 572; x += 7.7) {
    const y = lerp(path, x) + (rnd() - 0.5) * 8;
    const [a, b] = [Math.min(prev, y), Math.max(prev, y)];
    c.candle(x, a, b, y < prev, a - rnd() * 14, b + rnd() * 14, 4);
    prev = y;
  }
  for (let x = 28; x < 680; x += 7.7) {
    const h = 2 + rnd() * 5 + (x > 440 ? rnd() * 8 : 0) + (x > 605 && x < 625 ? 8 : 0);
    c.rect(x, 838 - h, 4, h, rnd() > 0.5 ? "#cf5a5a" : "#86a868");
  }
  c.line(21, 839, 1239, 839, "#888", 2);
  [["4:00",150],["5:45",205],["7:30",259],["9:15",314],["11:15",375],["13:15",437],["15:15",498],["17:15",559],["19:15",621],["1:45",759],["3:30",812],["5:15",866],["7:00",920]].forEach(([s, x]) => c.text(x, 858, s, "#555"));
  c.badge(72, 858, 90, "2026-3-20", "#000", "#eee");
  c.badge(705, 858, 42, "3-23", "#000", "#eee");
}

/* crude, market profile */
{
  const c = canvas("crudeTpo");
  const deep = "#1b5a22";
  c.tpo(21, [[300,60],[315,75],[332,92],[345,70],[385,68],[400,110],[420,150],[440,190],[455,240],[470,215],[490,165],[505,120],[520,85],[540,60],[545,45]], deep);
  c.tpo(21, [[545,40],[612,24]], "#2b8a35");
  c.line(21, 463, 222, 463, "#8a1010", 5);
  c.rect(51, 573, 8, 8, "#e01020");
  c.profile(262, [[175,266],[215,280],[270,268],[285,285],[310,315],[327,338],[340,318],[352,320],[375,308],[390,296],[405,325],[415,362],[425,375],[435,440],[448,455],[460,425],[470,418],[480,400],[490,365],[510,325],[520,305],[530,292],[560,290],[590,285],[640,282],[660,275],[682,280],[715,268],[747,264]], y => y >= 340 && y < 522 ? "#6c6c6c" : "#acacac");
  c.line(262, 448, 455, 448, "#b0505c", 5);
  c.line(455, 448, 487, 448, "#d80012", 8);
  c.line(262, 341, 485, 341, "#999");
  c.line(310, 522, 485, 522, "#999");
  c.line(491, 290, 491, 720, "#999", 4, "4 2");
  c.tpo(510, [[295,528],[310,555],[335,580],[350,572],[375,555],[395,560],[410,550],[425,550]], "#2f8b35");
  c.tpo(510, [[430,550],[455,570],[470,575],[500,570],[520,580],[550,570],[570,590],[600,610],[620,645],[650,595],[665,545]], deep);
  c.tpo(510, [[665,545],[700,530],[718,515]], "#2f8b35");
  c.line(510, 622, 640, 622, "#7a1010", 5, "6 3");
  c.line(503, 585, 503, 675, "#c8e23a", 5);
  c.rect(575, 328, 9, 8, "#e01020");
  c.profile(677, [[290,683],[305,692],[325,708],[348,716],[365,705],[400,695],[440,704],[465,692],[490,706],[520,712],[540,698],[575,700],[610,704],[645,712],[655,690],[680,690],[718,680]], y => y >= 307 && y < 577 ? "#6c6c6c" : "#acacac");
  c.line(680, 348, 716, 348, "#b0404c", 4);
  c.line(716, 349, 816, 349, "#d80012", 8);
  c.line(528, 295, 816, 295, "#6a6ae8", 3, "4 2");
  c.line(690, 307, 816, 307, "#888");
  c.line(680, 577, 816, 577, "#888");
  c.tpo(840, [[98,848],[110,858],[160,870],[220,872],[250,895],[270,930],[295,950],[330,930],[360,890],[390,860],[412,850]], "#185220");
  c.line(843, 295, 1239, 295, "#8a1010", 4);
  c.line(823, 98, 823, 1223, "#777", 3, "3 3");
  c.line(844, 412, 844, 1223, "#2c8a38", 4, "5 2");
  c.line(853, 690, 853, 920, "#2c8a38", 4, "5 2");
  c.line(836, 264, 836, 413, "#d4e660", 5);
  c.rect(852, 394, 387, 302, "#431b47");
  c.line(817, 709, 1239, 709, "#ccc", 2, "5 4");
  c.text(868, 709, "+", "#d01020", 22);
  c.line(15, 60, 1239, 60, "#888", 4);
  c.line(484, 39, 484, 1256, "#888");
  c.line(817, 39, 817, 1256, "#999");
  c.line(15, 824, 817, 824, "#888", 4);
  c.line(15, 1105, 817, 1105, "#888");
  c.line(15, 1192, 817, 1192, "#d00014", 8);
  c.line(15, 1225, 1239, 1225, "#bbb");
  c.badge(511, 1243, 49, "3-20", "#fff", "#555", 18, MONO);
  c.badge(842, 1243, 49, "3-23", "#fff", "#555", 18, MONO);
  c.rect(1171, 1229, 56, 26, "#0abf0a");
}

/* snapshot embedded in the note */
{
  const c = canvas("shot");
  c.rect(535, 919, 1089, 249, "#000");
  for (const x of [565, 752, 1117, 1350]) c.line(x, 932, x, 1168, "#3c3c3c", 2);
  c.line(535, 979, 1548, 979, "#999", 3);
  c.line(570, 1118, 570, 1168, "#777", 4, "4 3");
  c.line(675, 1116, 675, 1168, "#999", 4);
  c.line(754, 1080, 754, 1168, "#777", 4, "4 3");
  c.line(771, 1078, 771, 1168, "#1f6a3a", 3);
  c.profile(962, [[1078,967],[1100,972],[1112,976],[1140,967],[1162,966]], () => "#a0a0a0");
  c.line(1352, 1010, 1352, 1168, "#777", 4, "4 3");
  c.tpo(1366, [[1010,1372],[1050,1382],[1110,1388],[1140,1400],[1166,1430]], "#185e26");
  c.profile(1469, [[1012,1473],[1080,1475],[1092,1482],[1110,1473],[1140,1475],[1162,1484]], () => "#888");
  c.line(1469, 1012, 1548, 1012, "#999");
  c.line(1571, 919, 1571, 1168, "#eee", 2);
  ["103.00","102.50","102.00","101.50","101.00","100.50","100.00","99.50"].forEach((s, i) => c.text(1574, 940 + i * 28.3, s, "#ddd", 12, MONO, "start", "bold"));
}

/* calendar grid */
{
  const icon = '<svg class="ico" viewBox="0 0 16 16"><rect x="2" y="3" width="12" height="11" rx="2"/><path class="fill" d="M2 3h12v3H2z"/></svg>';
  const weeks = [
    { sun: ["Summary For", "Weekly News", "KIM Improve", "Weekly Pair C"], sat: "48 W %", date: "21" },
    { sun: ["Weekly Pair C", "KIM Improve", "Summary For", "Weekly News"], sat: "' % (3)", date: "28" },
    { sun: ["Weekly Pair C", "KIM Improve", "Summary For", "Weekly News"], sat: "1% (2)", date: "4" },
    { date: "11" }, { date: "18" }, { date: "25" }, { date: "2" },
    { all: ["3", "4", "5", "6", "7", "8", "9"] }
  ];
  document.getElementById("weeks").innerHTML = weeks.map(w => '<div class="week">' + [0, 1, 2, 3, 4, 5, 6].map(d => {
    const date = w.all ? w.all[d] : d === 6 ? w.date : "&nbsp;";
    const rows = d === 0 && w.sun ? w.sun.map(s => `<p>${icon}${s}</p>`).join("") : d === 6 && w.sat ? `<p class="tail">${w.sat}</p>` : "";
    return `<div class="day"><span>${date}</span>${rows}</div>`;
  }).join("") + "</div>").join("");
  document.getElementById("outline").innerHTML = Array.from({ length: 25 }, (_, i) => `<i${i === 17 ? ' class="at"' : ""}></i>`).join("");
}
```
